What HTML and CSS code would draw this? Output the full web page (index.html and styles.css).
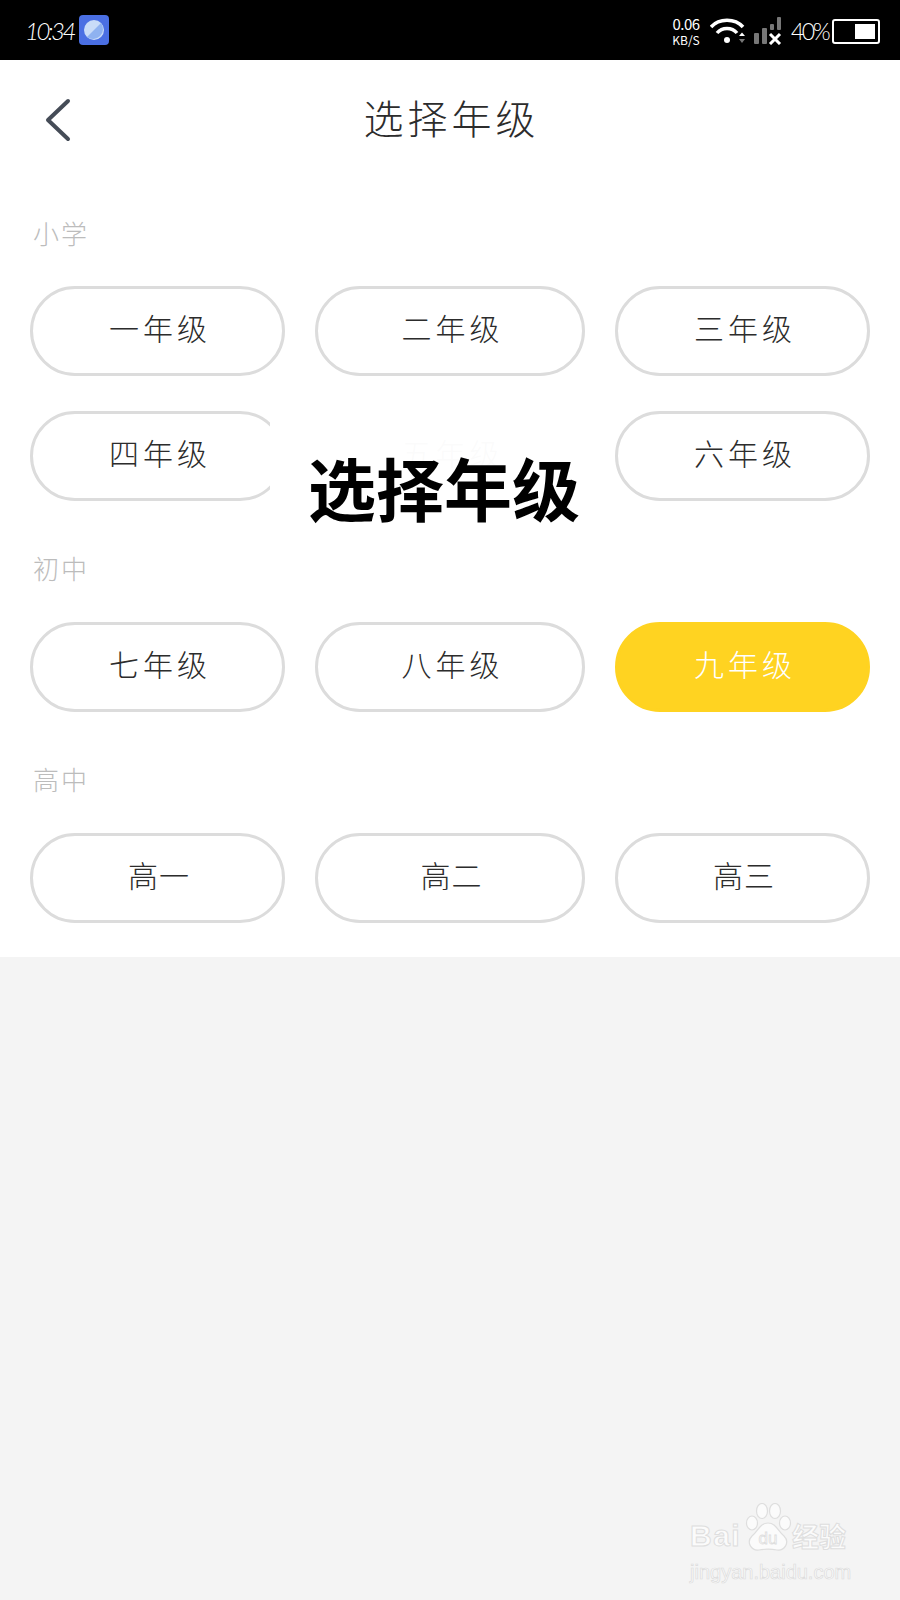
FILE: index.html
```html
<!DOCTYPE html>
<html lang="zh-CN">
<head>
    <meta charset="UTF-8">
    <meta name="viewport" content="width=device-width, initial-scale=1.0">
    <title>选择年级</title>
    <link rel="stylesheet" href="styles.css">
</head>
<body>
    <div class="status-bar">
        <div class="status-left">
            <span class="clock">10:34</span>
            <svg class="app-icon" width="30" height="30" viewBox="0 0 30 30">
                <rect width="30" height="30" rx="4" fill="#4a6fe3"/>
                <circle cx="15" cy="15" r="10" fill="#c9dcf8"/>
                <path d="M22 8 A10 10 0 0 1 8 22 Z" fill="#8fb2f0"/>
            </svg>
        </div>
        <div class="status-right">
            <div class="speed"><span>0.06</span><span class="speed-unit">KB/S</span></div>
            <svg class="wifi" width="36" height="28" viewBox="0 0 36 28" fill="none" stroke="#fff" stroke-width="3.5">
                <path d="M1 10 C9 1 25 1 33 10"/>
                <path d="M7 16 C12 10 22 10 27 16"/>
                <circle cx="17" cy="23" r="3" fill="#fff" stroke="none"/>
                <path d="M29 19 L32 15.500 L35 19 Z" fill="#fff" stroke="none"/>
                <path d="M29 22 L32 26 L35 22 Z" fill="#777" stroke="none"/>
            </svg>
            <svg class="signal" width="28" height="28" viewBox="0 0 28 28">
                <rect x="0" y="16" width="5" height="11" rx="1" fill="#777"/>
                <rect x="8" y="11" width="5" height="16" rx="1" fill="#777"/>
                <rect x="16" y="7" width="4" height="6" rx="1" fill="#777"/>
                <rect x="23" y="0" width="4" height="13" rx="1" fill="#777"/>
                <path d="M16 17 L26 27 M26 17 L16 27" stroke="#fff" stroke-width="3"/>
            </svg>
            <span class="battery-text">40%</span>
            <div class="battery"><div class="battery-fill"></div></div>
        </div>
    </div>

    <div class="main">
        <div class="header">
            <svg class="back" width="26" height="44" viewBox="0 0 26 44" fill="none" stroke="#454c57" stroke-width="4" stroke-linecap="round" stroke-linejoin="round">
                <path d="M23 3 L3 22 L23 41"/>
            </svg>
            <h1>选择年级</h1>
        </div>

        <div class="section first">
            <div class="section-title">小学</div>
            <div class="grade-grid">
                <div class="grade">一年级</div>
                <div class="grade">二年级</div>
                <div class="grade">三年级</div>
                <div class="grade">四年级</div>
                <div class="grade">五年级</div>
                <div class="grade">六年级</div>
            </div>
        </div>

        <div class="section">
            <div class="section-title">初中</div>
            <div class="grade-grid">
                <div class="grade">七年级</div>
                <div class="grade">八年级</div>
                <div class="grade active">九年级</div>
            </div>
        </div>

        <div class="section">
            <div class="section-title">高中</div>
            <div class="grade-grid">
                <div class="grade wide">高一</div>
                <div class="grade wide">高二</div>
                <div class="grade wide">高三</div>
            </div>
        </div>

        <div class="caption">选择年级</div>
    </div>

    <div class="watermark">
        <div class="wm-logo">
            <span class="wm-text">Bai</span>
            <svg class="wm-paw" width="48" height="50" viewBox="0 0 48 50" fill="#fbfbfb" stroke="#dedede" stroke-width="1.2">
                <ellipse cx="8" cy="20" rx="5.500" ry="7"/>
                <ellipse cx="18" cy="8" rx="5.500" ry="7.500"/>
                <ellipse cx="31" cy="8" rx="5.500" ry="7.500"/>
                <ellipse cx="41" cy="20" rx="5.500" ry="7"/>
                <path d="M24 20 C32 20 34 28 40 33 C46 39 41 48 33 47 C28 46 20 46 15 47 C7 48 2 39 8 33 C14 28 16 20 24 20 Z"/>
                <text x="24" y="41" text-anchor="middle" class="wm-du">du</text>
            </svg>
            <span class="wm-text wm-cn">经验</span>
        </div>
        <div class="wm-url">jingyan.baidu.com</div>
    </div>
</body>
</html>
```

FILE: styles.css
```css
* {
    margin: 0;
    padding: 0;
    box-sizing: border-box;
    font-family: "Noto Sans CJK SC", "Noto Sans", sans-serif;
}

body {
    position: relative;
    min-height: 1600px;
    background: #f4f4f4;
}

.status-bar {
    height: 60px;
    background: #000;
    color: #fff;
    display: flex;
    justify-content: space-between;
    align-items: center;
    padding: 0 20px 0 25px;
}

.status-left,
.status-right {
    display: flex;
    align-items: center;
}

.clock {
    font-family: "Lato", sans-serif;
    font-weight: 300;
    font-style: italic;
    font-size: 24px;
    letter-spacing: -2.500px;
    width: 54px;
}

.status-right {
    margin-top: 2px;
}

.speed {
    display: flex;
    flex-direction: column;
    align-items: center;
    width: 28px;
    font-family: "Lato", sans-serif;
    font-size: 15px;
    line-height: 18px;
    letter-spacing: -0.5px;
    margin-right: 10px;
}

.speed-unit {
    font-size: 12px;
    line-height: 14px;
    letter-spacing: 0;
}

.wifi {
    margin-right: 8px;
}

.signal {
    margin-right: 9px;
}

.battery-text {
    font-family: "Lato", sans-serif;
    font-weight: 300;
    font-size: 23px;
    letter-spacing: -2.500px;
    width: 41px;
}

.battery {
    width: 48px;
    height: 25px;
    border: 2px solid #fff;
    border-radius: 3px;
    padding: 3px;
    display: flex;
    justify-content: flex-end;
}

.battery-fill {
    width: 20px;
    background: #fff;
}

.main {
    position: relative;
    background: #fff;
    height: 897px;
}

.header {
    position: relative;
    height: 116px;
    display: flex;
    justify-content: center;
    align-items: center;
}

.header h1 {
    font-size: 40px;
    font-weight: 300;
    letter-spacing: 4px;
    color: #2c2c2c;
    margin: 0 0 2px 3px;
}

.back {
    position: absolute;
    left: 45px;
    top: 38px;
}

.section {
    padding: 52px 30px 0;
}

.section.first {
    padding-top: 42px;
}

.section-title {
    font-size: 26px;
    font-weight: 300;
    line-height: 30px;
    letter-spacing: 2px;
    color: #bcbcbc;
    padding-left: 3px;
    margin-bottom: 39px;
}

.section.first .section-title {
    margin-bottom: 38px;
}

.grade-grid {
    display: grid;
    grid-template-columns: 255px 270px 255px;
    gap: 35px 30px;
}

.grade {
    height: 90px;
    border: 3px solid #dcdcdc;
    border-radius: 45px;
    padding: 0 0 8px 5px;
    display: flex;
    justify-content: center;
    align-items: center;
    font-size: 30px;
    font-weight: 300;
    letter-spacing: 4px;
    color: #2c2c2c;
}

.grade.wide {
    letter-spacing: 1px;
    padding-left: 3px;
}

.grade.active {
    background: #ffd321;
    border-color: #ffd321;
    color: #fff;
}

/* caption pasted over the screenshot, hides the fifth grade */
.caption {
    position: absolute;
    left: 270px;
    top: 345px;
    width: 320px;
    height: 135px;
    padding: 0 0 8px 28px;
    display: flex;
    justify-content: center;
    align-items: flex-end;
    background: rgba(255, 255, 255, 0.98);
    font-size: 68px;
    line-height: 90px;
    font-weight: 700;
    color: #000;
}

.watermark {
    position: absolute;
    left: 690px;
    top: 1503px;
    width: 165px;
}

.wm-logo {
    display: flex;
    align-items: flex-end;
    height: 50px;
}

.wm-text {
    font-family: "Liberation Sans", sans-serif;
    font-weight: 700;
    font-size: 30px;
    line-height: 34px;
    letter-spacing: 1.500px;
    color: #fbfbfb;
    -webkit-text-stroke: 1px #dedede;
    width: 54px;
}

.wm-cn {
    font-family: "Noto Sans CJK SC", sans-serif;
    font-size: 27px;
    letter-spacing: 0;
    width: auto;
    white-space: nowrap;
}

.wm-du {
    font-family: "Liberation Sans", sans-serif;
    font-size: 17px;
    stroke-width: 0.8;
}

.wm-url {
    font-family: "Liberation Sans", sans-serif;
    font-size: 20px;
    line-height: 26px;
    margin-top: 6px;
    white-space: nowrap;
    color: #fbfbfb;
    -webkit-text-stroke: 0.7px #dcdcdc;
}
```
